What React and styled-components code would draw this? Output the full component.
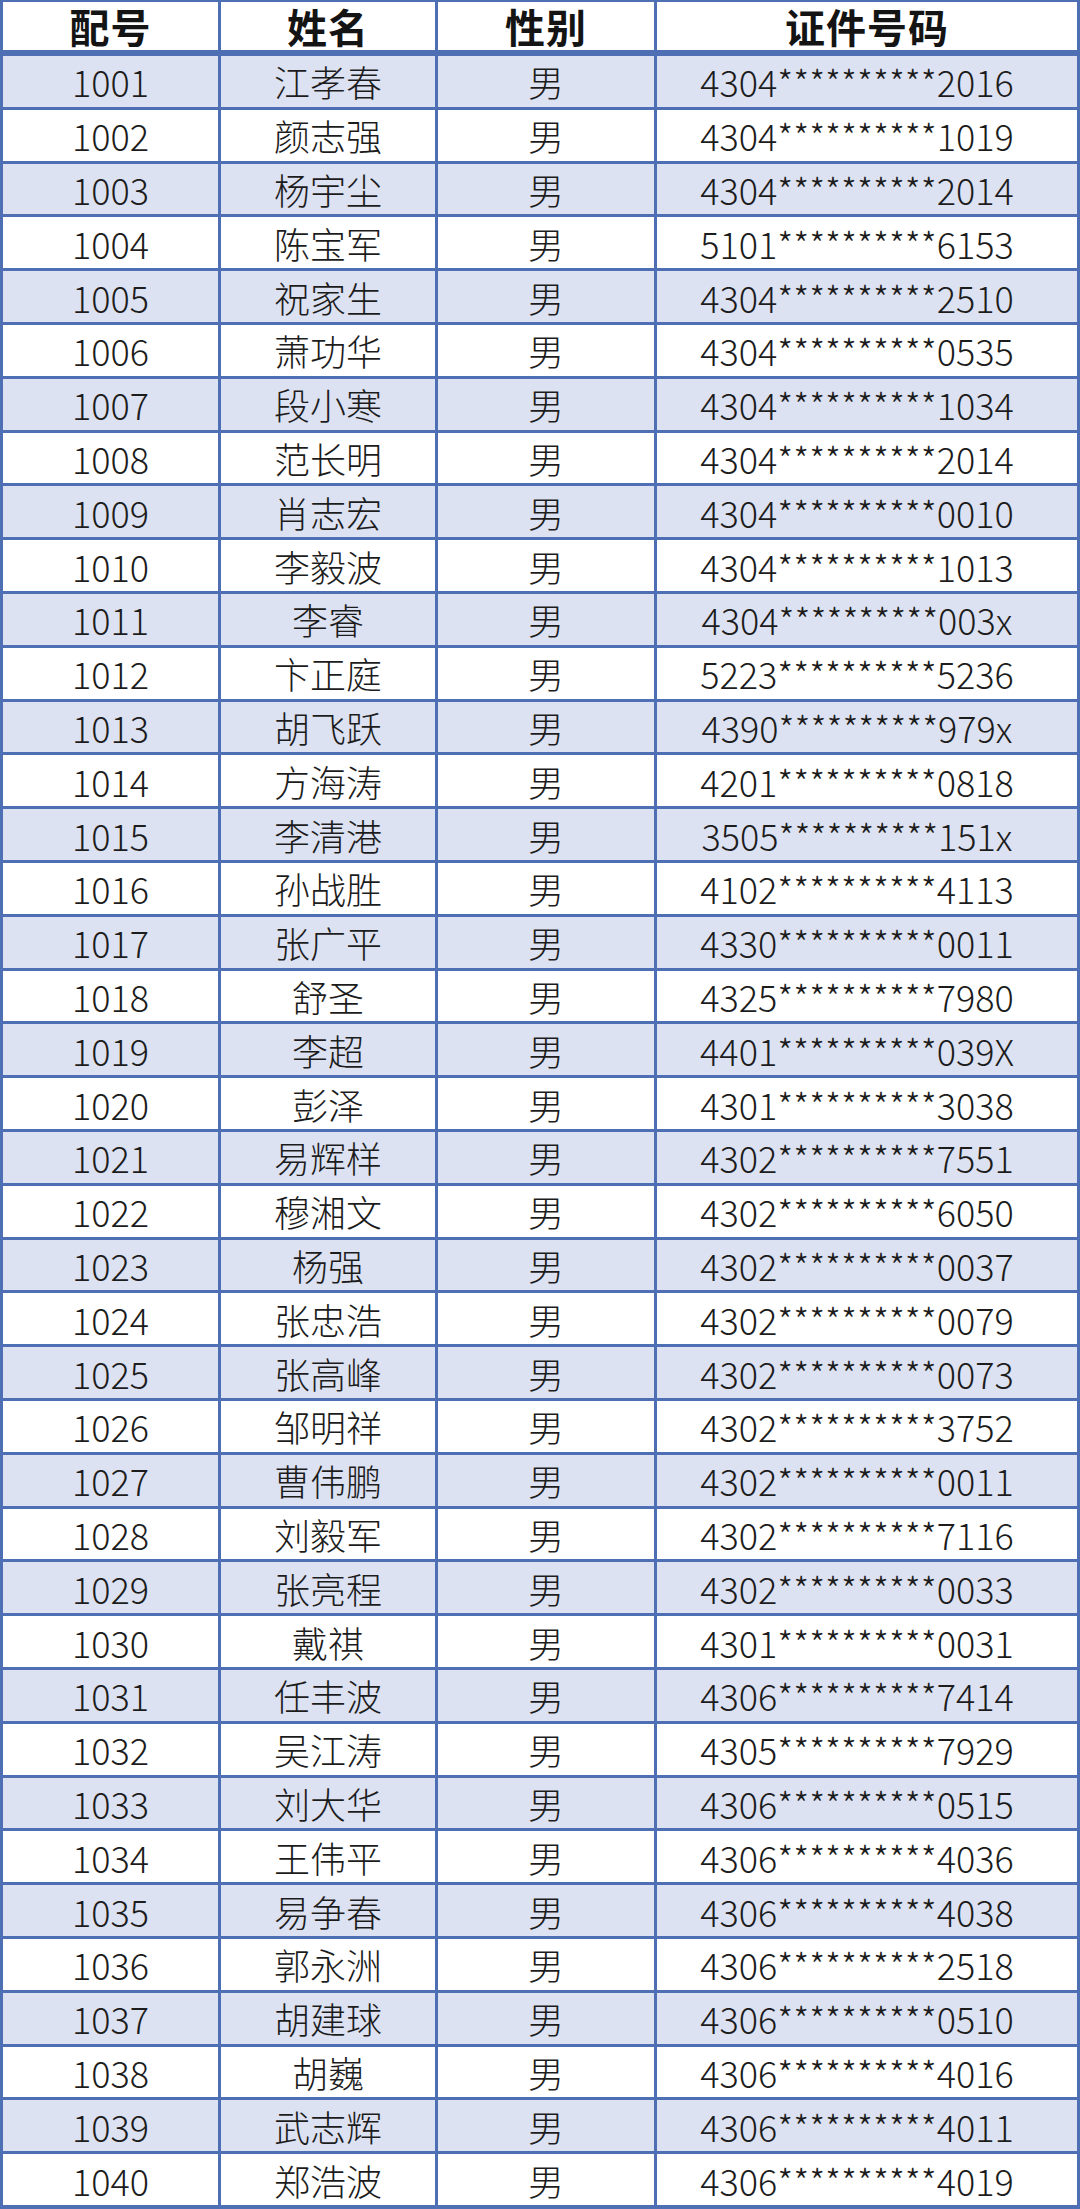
import React from 'react'
import styled, { createGlobalStyle } from 'styled-components'

const border = '#4f6fb4'

const GlobalStyle = createGlobalStyle`
  html, body {
    margin: 0;
    padding: 0;
    background: #fff;
  }
  body {
    font-family: "Noto Sans CJK SC", "Noto Sans", sans-serif;
  }
`

const Table = styled.div`
  box-sizing: border-box;
  width: 1080px;
  height: 2209px;
  display: grid;
  grid-template-columns: 215px 214px 216px 1fr;
  grid-template-rows: 51px repeat(40, minmax(0, 1fr));
  gap: 3px;
  padding: 2px 3px 4px 3px;
  background: ${border};
`

const HeadCell = styled.div`
  box-sizing: border-box;
  display: flex;
  align-items: center;
  justify-content: center;
  background: #fff;
  border-bottom: 3px solid ${border};
  font-size: 40px;
  line-height: 46px;
  font-weight: 700;
  color: #141414;
  letter-spacing: 1px;
`

const Cell = styled.div`
  display: flex;
  align-items: center;
  justify-content: center;
  min-height: 0;
  background: ${(p) => (p.$tinted ? '#dce2f2' : '#fff')};
  font-size: 36px;
  line-height: 44px;
  font-weight: 300;
  color: #1c1c1c;
  white-space: nowrap;
`

const IdCell = styled(Cell)`
  padding-right: 20px;
`

const rows = [
  ['1001', '江孝春', '4304**********2016'],
  ['1002', '颜志强', '4304**********1019'],
  ['1003', '杨宇尘', '4304**********2014'],
  ['1004', '陈宝军', '5101**********6153'],
  ['1005', '祝家生', '4304**********2510'],
  ['1006', '萧功华', '4304**********0535'],
  ['1007', '段小寒', '4304**********1034'],
  ['1008', '范长明', '4304**********2014'],
  ['1009', '肖志宏', '4304**********0010'],
  ['1010', '李毅波', '4304**********1013'],
  ['1011', '李睿', '4304**********003x'],
  ['1012', '卞正庭', '5223**********5236'],
  ['1013', '胡飞跃', '4390**********979x'],
  ['1014', '方海涛', '4201**********0818'],
  ['1015', '李清港', '3505**********151x'],
  ['1016', '孙战胜', '4102**********4113'],
  ['1017', '张广平', '4330**********0011'],
  ['1018', '舒圣', '4325**********7980'],
  ['1019', '李超', '4401**********039X'],
  ['1020', '彭泽', '4301**********3038'],
  ['1021', '易辉样', '4302**********7551'],
  ['1022', '穆湘文', '4302**********6050'],
  ['1023', '杨强', '4302**********0037'],
  ['1024', '张忠浩', '4302**********0079'],
  ['1025', '张高峰', '4302**********0073'],
  ['1026', '邹明祥', '4302**********3752'],
  ['1027', '曹伟鹏', '4302**********0011'],
  ['1028', '刘毅军', '4302**********7116'],
  ['1029', '张亮程', '4302**********0033'],
  ['1030', '戴祺', '4301**********0031'],
  ['1031', '任丰波', '4306**********7414'],
  ['1032', '吴江涛', '4305**********7929'],
  ['1033', '刘大华', '4306**********0515'],
  ['1034', '王伟平', '4306**********4036'],
  ['1035', '易争春', '4306**********4038'],
  ['1036', '郭永洲', '4306**********2518'],
  ['1037', '胡建球', '4306**********0510'],
  ['1038', '胡巍', '4306**********4016'],
  ['1039', '武志辉', '4306**********4011'],
  ['1040', '郑浩波', '4306**********4019'],
]

export default function App() {
  return (
    <>
      <GlobalStyle />
      <Table>
        <HeadCell>配号</HeadCell>
        <HeadCell>姓名</HeadCell>
        <HeadCell>性别</HeadCell>
        <HeadCell>证件号码</HeadCell>
        {rows.map(([no, name, id], i) => {
          const tinted = i % 2 === 0
          return (
            <React.Fragment key={no}>
              <Cell $tinted={tinted}>{no}</Cell>
              <Cell $tinted={tinted}>{name}</Cell>
              <Cell $tinted={tinted}>男</Cell>
              <IdCell $tinted={tinted}>{id}</IdCell>
            </React.Fragment>
          )
        })}
      </Table>
    </>
  )
}
